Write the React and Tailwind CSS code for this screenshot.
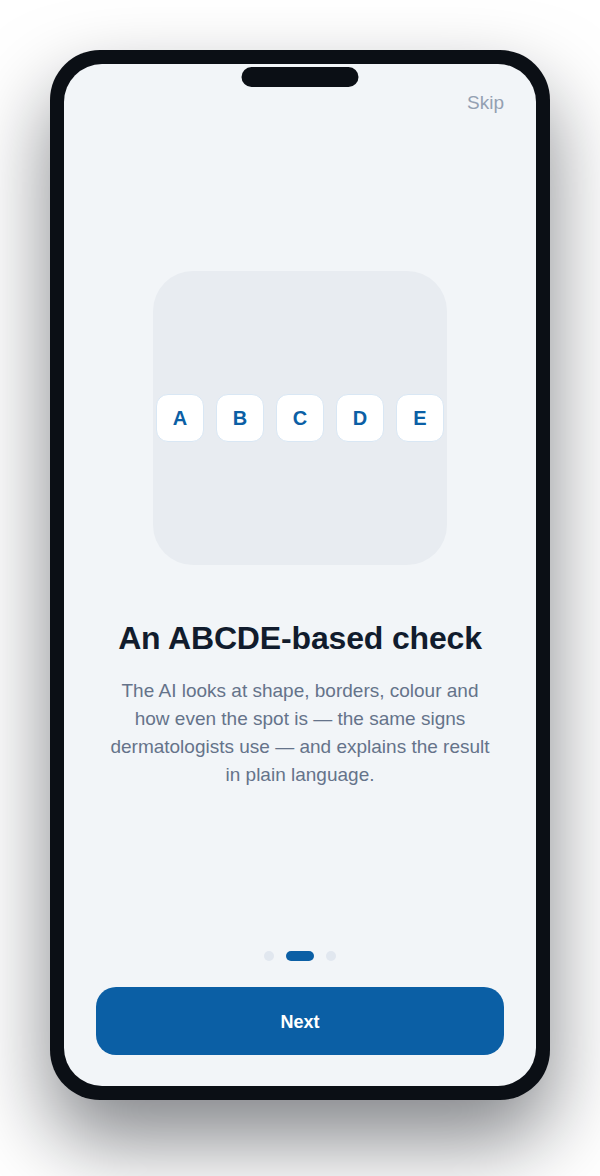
const letters = ['A', 'B', 'C', 'D', 'E'];

function LetterTile({ letter }) {
  return (
    <div className="flex items-center justify-center w-12 h-12 rounded-xl bg-white border border-[#d9e7f4] text-[20px] font-bold text-[#0b5fa5]">
      {letter}
    </div>
  );
}

function Dots({ active = 1, count = 3 }) {
  return (
    <div className="flex items-center justify-center gap-3">
      {Array.from({ length: count }).map((_, i) =>
        i === active ? (
          <span key={i} className="block w-7 h-2.5 rounded-full bg-[#0b5fa5]" />
        ) : (
          <span key={i} className="block w-2.5 h-2.5 rounded-full bg-[#e1e7ef]" />
        )
      )}
    </div>
  );
}

export default function App() {
  return (
    <div
      className="w-[600px] h-[1176px] bg-white pt-[50px] px-[50px] overflow-hidden"
      style={{ fontFamily: '"Liberation Sans", Arial, sans-serif' }}
    >
      {/* Phone frame */}
      <div className="w-[500px] h-[1050px] rounded-[50px] bg-[#0b0f15] p-[14px] shadow-[0_40px_80px_rgba(10,14,22,0.5)]">
        <div className="relative flex flex-col h-full rounded-[38px] bg-[#f2f5f8] px-8 pb-[31px] overflow-hidden">
          {/* Notch */}
          <div className="absolute top-[3px] left-1/2 -translate-x-1/2 w-[117px] h-5 rounded-full bg-[#0b0f15]" />

          {/* Top bar */}
          <div className="flex justify-end pt-[27px]">
            <button className="text-[19px] leading-6 text-[#94a0b2]">Skip</button>
          </div>

          {/* Illustration */}
          <div className="flex justify-center mt-[156px]">
            <div className="flex items-center justify-center w-[294px] h-[294px] rounded-[40px] bg-[#e8ecf1]">
              <div className="flex gap-3">
                {letters.map((l) => (
                  <LetterTile key={l} letter={l} />
                ))}
              </div>
            </div>
          </div>

          {/* Copy */}
          <h1 className="mt-[53px] text-center text-[32px] leading-10 font-bold tracking-[-0.005em] text-[#111c2d]">
            An ABCDE-based check
          </h1>
          <p className="mt-[19px] mx-auto w-[392px] text-center text-[19px] leading-7 text-[#65738a]">
            The AI looks at shape, borders, colour and how even the spot is — the same signs dermatologists use — and explains the result in plain language.
          </p>

          <div className="flex-1" />

          <Dots active={1} />

          <button className="mt-[26px] h-[68px] w-full rounded-[20px] bg-[#0b5fa5] pt-[2px] text-white text-[18px] font-bold">
            Next
          </button>
        </div>
      </div>
    </div>
  );
}
